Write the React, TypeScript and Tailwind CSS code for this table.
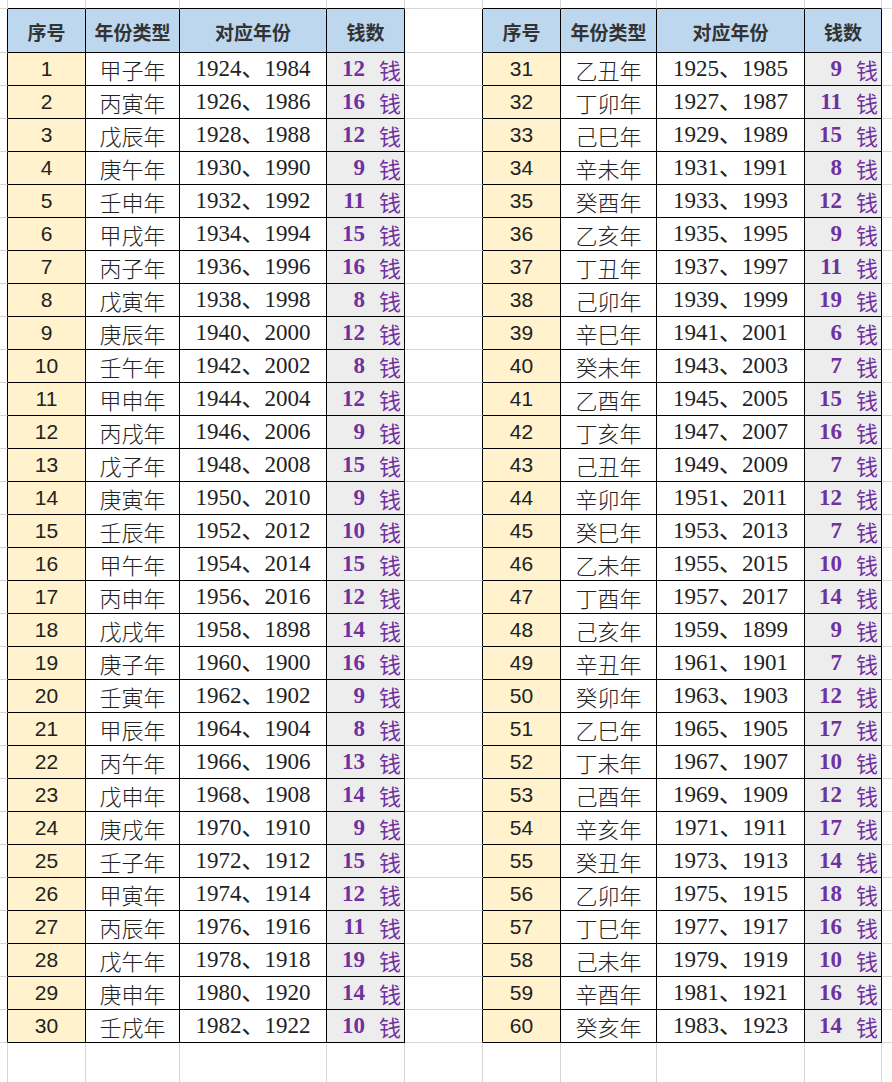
import type { ReactNode } from "react";

type Row = [number, string, string, number];

const LEFT: Row[] = [
  [1, "甲子年", "1924、1984", 12],
  [2, "丙寅年", "1926、1986", 16],
  [3, "戊辰年", "1928、1988", 12],
  [4, "庚午年", "1930、1990", 9],
  [5, "壬申年", "1932、1992", 11],
  [6, "甲戌年", "1934、1994", 15],
  [7, "丙子年", "1936、1996", 16],
  [8, "戊寅年", "1938、1998", 8],
  [9, "庚辰年", "1940、2000", 12],
  [10, "壬午年", "1942、2002", 8],
  [11, "甲申年", "1944、2004", 12],
  [12, "丙戌年", "1946、2006", 9],
  [13, "戊子年", "1948、2008", 15],
  [14, "庚寅年", "1950、2010", 9],
  [15, "壬辰年", "1952、2012", 10],
  [16, "甲午年", "1954、2014", 15],
  [17, "丙申年", "1956、2016", 12],
  [18, "戊戌年", "1958、1898", 14],
  [19, "庚子年", "1960、1900", 16],
  [20, "壬寅年", "1962、1902", 9],
  [21, "甲辰年", "1964、1904", 8],
  [22, "丙午年", "1966、1906", 13],
  [23, "戊申年", "1968、1908", 14],
  [24, "庚戌年", "1970、1910", 9],
  [25, "壬子年", "1972、1912", 15],
  [26, "甲寅年", "1974、1914", 12],
  [27, "丙辰年", "1976、1916", 11],
  [28, "戊午年", "1978、1918", 19],
  [29, "庚申年", "1980、1920", 14],
  [30, "壬戌年", "1982、1922", 10],
];

const RIGHT: Row[] = [
  [31, "乙丑年", "1925、1985", 9],
  [32, "丁卯年", "1927、1987", 11],
  [33, "己巳年", "1929、1989", 15],
  [34, "辛未年", "1931、1991", 8],
  [35, "癸酉年", "1933、1993", 12],
  [36, "乙亥年", "1935、1995", 9],
  [37, "丁丑年", "1937、1997", 11],
  [38, "己卯年", "1939、1999", 19],
  [39, "辛巳年", "1941、2001", 6],
  [40, "癸未年", "1943、2003", 7],
  [41, "乙酉年", "1945、2005", 15],
  [42, "丁亥年", "1947、2007", 16],
  [43, "己丑年", "1949、2009", 7],
  [44, "辛卯年", "1951、2011", 12],
  [45, "癸巳年", "1953、2013", 7],
  [46, "乙未年", "1955、2015", 10],
  [47, "丁酉年", "1957、2017", 14],
  [48, "己亥年", "1959、1899", 9],
  [49, "辛丑年", "1961、1901", 7],
  [50, "癸卯年", "1963、1903", 12],
  [51, "乙巳年", "1965、1905", 17],
  [52, "丁未年", "1967、1907", 10],
  [53, "己酉年", "1969、1909", 12],
  [54, "辛亥年", "1971、1911", 17],
  [55, "癸丑年", "1973、1913", 14],
  [56, "乙卯年", "1975、1915", 18],
  [57, "丁巳年", "1977、1917", 16],
  [58, "己未年", "1979、1919", 10],
  [59, "辛酉年", "1981、1921", 16],
  [60, "癸亥年", "1983、1923", 14],
];

const HEADERS = ["序号", "年份类型", "对应年份", "钱数"];

const CJK = "font-['Noto_Sans_CJK_SC',sans-serif]";
const SERIF = "font-['Liberation_Serif','Noto_Sans_CJK_SC',serif]";
const SANS = "font-['Liberation_Sans','Noto_Sans_CJK_SC',sans-serif]";

// spreadsheet cell: every cell draws its own right + bottom line
function Cell({
  blackR,
  blackB,
  h,
  className = "",
  children,
}: {
  blackR: boolean;
  blackB: boolean;
  h: string;
  className?: string;
  children?: ReactNode;
}) {
  return (
    <div
      className={[
        "border-r border-b flex items-center",
        h,
        blackR ? "border-r-black" : "border-r-[#d6d6d6]",
        blackB ? "border-b-black" : "border-b-[#d6d6d6]",
        className,
      ].join(" ")}
    >
      {children}
    </div>
  );
}

function tableCells(row: Row | null, h: string, key: string) {
  if (!row) {
    return HEADERS.map((t, i) => (
      <Cell key={key + i} blackR blackB h={h} className="justify-center bg-[#bdd7ee] pt-1">
        <span className={`${CJK} text-[19px] font-bold text-[#333]`}>{t}</span>
      </Cell>
    ));
  }
  const [n, kind, years, money] = row;
  return [
    <Cell key={key + "a"} blackR blackB h={h} className="justify-center bg-[#fff2cc]">
      <span className={`${SANS} text-[21px] text-[#222]`}>{n}</span>
    </Cell>,
    <Cell key={key + "b"} blackR blackB h={h} className="justify-center bg-white">
      <span className={`${CJK} text-[22px] text-[#222] font-light`}>{kind}</span>
    </Cell>,
    <Cell key={key + "c"} blackR blackB h={h} className="justify-center bg-white">
      <span className={`${SERIF} text-[23px] text-[#222]`}>{years}</span>
    </Cell>,
    <Cell key={key + "d"} blackR blackB h={h} className="justify-end bg-[#ededed] pr-[3px] text-[#7030a0]">
      <span className={`${SERIF} text-[23px] font-bold`}>{money}</span>
      <span className={`${CJK} text-[22px] ml-[14px]`}>钱</span>
    </Cell>,
  ];
}

export default function App() {
  const rows: ReactNode[] = [];

  // top spacer row above the tables
  for (let c = 0; c < 11; c++) {
    const inTable = (c >= 1 && c <= 4) || (c >= 6 && c <= 9);
    rows.push(<Cell key={"top" + c} blackR={false} blackB={inTable} h="h-[9px]" />);
  }

  const body: (Row | null)[] = [null, ...LEFT.map((_, i) => i as unknown as null)];
  body.forEach((_, i) => {
    const h = i === 0 ? "h-[44px]" : "h-[33px]";
    const l = i === 0 ? null : LEFT[i - 1];
    const r = i === 0 ? null : RIGHT[i - 1];
    rows.push(<Cell key={"m0" + i} blackR blackB={false} h={h} />);
    rows.push(...tableCells(l, h, "l" + i));
    rows.push(<Cell key={"gap" + i} blackR blackB={false} h={h} />);
    rows.push(...tableCells(r, h, "r" + i));
    rows.push(<Cell key={"end" + i} blackR={false} blackB={false} h={h} />);
  });

  // empty sheet below
  for (let c = 0; c < 11; c++) {
    rows.push(<Cell key={"bot" + c} blackR={false} blackB={false} h="h-[60px]" />);
  }

  return (
    <div className="w-[892px] h-[1082px] overflow-hidden bg-white">
      <div className="grid grid-cols-[8px_78px_94px_147px_78px_78px_78px_96px_148px_77px_20px]">
        {rows}
      </div>
    </div>
  );
}
